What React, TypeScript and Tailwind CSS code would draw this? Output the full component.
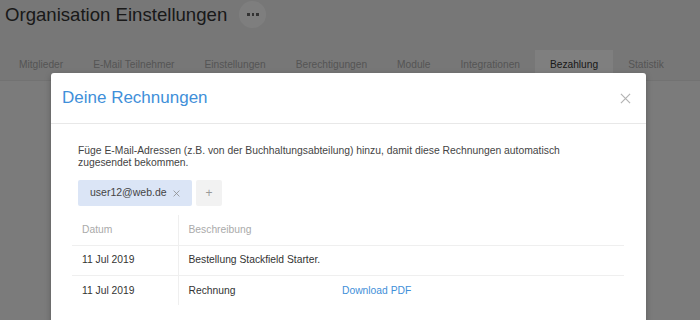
const tabs = [
  'Mitglieder',
  'E-Mail Teilnehmer',
  'Einstellungen',
  'Berechtigungen',
  'Module',
  'Integrationen',
  'Bezahlung',
  'Statistik',
];

const invoices = [
  { date: '11 Jul 2019', description: 'Bestellung Stackfield Starter.', pdf: false },
  { date: '11 Jul 2019', description: 'Rechnung', pdf: true },
];

function CloseIcon({ className }: { className?: string }) {
  return (
    <svg viewBox="0 0 12 12" className={className} fill="none" stroke="currentColor" strokeWidth="1.3">
      <path d="M1 1l10 10M11 1L1 11" />
    </svg>
  );
}

function InvoiceModal() {
  return (
    <div className="absolute left-[51px] top-[73px] w-[595px] h-[300px] rounded-[3px] bg-white shadow-[0_2px_6px_rgba(0,0,0,0.25)]">
      <header className="flex h-[51px] items-center justify-between border-b border-[#e8e8e8] pl-[11px] pr-[15px]">
        <h2 className="text-[17px] text-[#3f8fd9]">Deine Rechnungen</h2>
        <button className="text-[#b3b3b3]">
          <CloseIcon className="h-[11px] w-[11px]" />
        </button>
      </header>

      <div className="px-[21px] pt-[21px]">
        <p className="max-w-[500px] pl-[6px] text-[10.35px] leading-[12px] text-[#444]">
          Füge E-Mail-Adressen (z.B. von der Buchhaltungsabteilung) hinzu, damit diese Rechnungen automatisch
          zugesendet bekommen.
        </p>

        <div className="mt-[11px] flex gap-[4px] pl-[6px]">
          <span className="flex h-[26px] w-[114px] items-center gap-[6px] rounded-[2px] bg-[#dbe5f6] pl-[12px] text-[10.5px] text-[#444]">
            user12@web.de
            <CloseIcon className="h-[7px] w-[7px] text-[#888]" />
          </span>
          <button className="flex h-[26px] w-[26px] items-center justify-center rounded-[2px] bg-[#f2f2f2] text-[12px] text-[#999]">
            +
          </button>
        </div>

        <table className="mt-[9px] w-[552px] border-collapse text-left text-[10.3px]">
          <thead>
            <tr className="h-[30px] border-b border-[#efefef]">
              <th className="w-[106px] border-r border-[#efefef] pl-[10px] font-normal text-[#aaa]">Datum</th>
              <th className="w-[154px] pl-[10px] font-normal text-[#aaa]">Beschreibung</th>
              <th />
            </tr>
          </thead>
          <tbody>
            {invoices.map((row, i) => (
              <tr key={i} className={`h-[30px] ${i < invoices.length - 1 ? 'border-b border-[#efefef]' : ''}`}>
                <td className="border-r border-[#efefef] pl-[10px] text-[#333]">{row.date}</td>
                <td className="pl-[10px] text-[#333]">{row.description}</td>
                <td className="pl-[10px] text-[#3f8fd9]">{row.pdf ? 'Download PDF' : ''}</td>
              </tr>
            ))}
          </tbody>
        </table>
      </div>
    </div>
  );
}

export default function App() {
  return (
    <div className="relative h-[320px] w-[700px] overflow-hidden bg-[#f6f6f6] font-['Liberation_Sans',Arial,sans-serif]">
      <div className="bg-[#efefef]">
        <div className="flex h-[50px] items-start gap-[12px] pl-[5px] pt-[1px]">
          <h1 className="text-[18.6px] leading-[28px] text-[#333]">Organisation Einstellungen</h1>
          <button className="flex h-[27px] w-[27px] items-center justify-center gap-[2px] rounded-full bg-[#fdfdfd]">
            <span className="h-[2.5px] w-[2.5px] bg-[#666]" />
            <span className="h-[2.5px] w-[2.5px] bg-[#666]" />
            <span className="h-[2.5px] w-[2.5px] bg-[#666]" />
          </button>
        </div>
        <nav className="flex h-[31px] border-b border-[#e4e4e4] pl-[4px]">
          {tabs.map((tab) => (
            <span
              key={tab}
              className={`flex items-center px-[15px] text-[10.2px] ${
                tab === 'Bezahlung' ? 'bg-white text-[#333]' : 'text-[#aaa]'
              }`}
            >
              {tab}
            </span>
          ))}
        </nav>
      </div>

      <div className="absolute inset-0 bg-black/50" />

      <InvoiceModal />
    </div>
  );
}
